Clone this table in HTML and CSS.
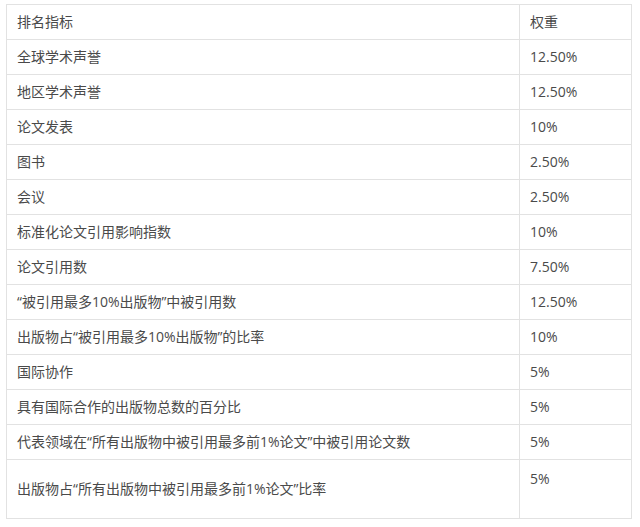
FILE: index.html
```html
<!DOCTYPE html>
<html lang="zh">
<head>
<meta charset="utf-8">
<link rel="stylesheet" href="styles.css">
</head>
<body>
<table class="rank">
  <tr><td>排名指标</td><td>权重</td></tr>
  <tr><td>全球学术声誉</td><td>12.50%</td></tr>
  <tr><td>地区学术声誉</td><td>12.50%</td></tr>
  <tr><td>论文发表</td><td>10%</td></tr>
  <tr><td>图书</td><td>2.50%</td></tr>
  <tr><td>会议</td><td>2.50%</td></tr>
  <tr><td>标准化论文引用影响指数</td><td>10%</td></tr>
  <tr><td>论文引用数</td><td>7.50%</td></tr>
  <tr><td>“被引用最多10%出版物”中被引用数</td><td>12.50%</td></tr>
  <tr><td>出版物占“被引用最多10%出版物”的比率</td><td>10%</td></tr>
  <tr><td>国际协作</td><td>5%</td></tr>
  <tr><td>具有国际合作的出版物总数的百分比</td><td>5%</td></tr>
  <tr><td>代表领域在“所有出版物中被引用最多前1%论文”中被引用论文数</td><td>5%</td></tr>
  <tr class="last"><td>出版物占“所有出版物中被引用最多前1%论文”比率</td><td class="top">5%</td></tr>
</table>
</body>
</html>
```
FILE: styles.css
```css
html, body {
  margin: 0;
  padding: 0;
  background: #ffffff;
}
body {
  padding: 4px 0 0 6px;
  font-family: "Open Sans", "Noto Sans CJK SC", sans-serif;
  font-size: 14px;
  font-variant-numeric: tabular-nums;
  color: #4a4a4a;
}
.rank {
  border-collapse: collapse;
  width: 626px;
}
.rank td {
  border: 1px solid #e2e2e2;
  height: 35px;
  padding: 0 10px;
  line-height: 20px;
  vertical-align: middle;
  box-sizing: border-box;
}
.rank td:first-child {
  width: 513px;
}
.rank tr.last td {
  height: 59px;
}
.rank td.top {
  vertical-align: top;
  padding-top: 9px;
}
```
